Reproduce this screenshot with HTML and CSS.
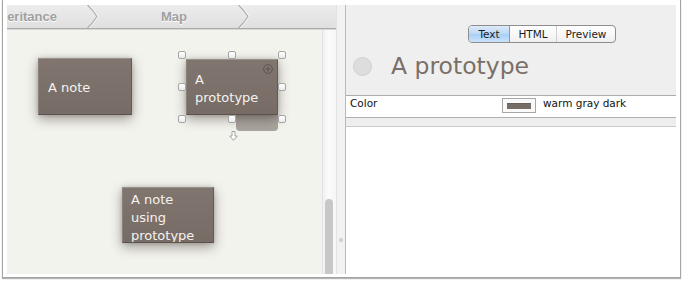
FILE: index.html
```html
<!DOCTYPE html>
<html lang="en">
<head>
<meta charset="utf-8">
<title>Map</title>
<link rel="stylesheet" href="styles.css">
</head>
<body>
<div class="window">
  <div class="left-pane">
    <nav class="crumbs">
      <div class="crumb crumb-first"><span>eritance</span></div>
      <svg class="chev" width="12" height="23" viewBox="0 0 12 23"><path class="chev-hi" d="M1.5 0 Q7 5 11 11.5 Q7 18 1.5 23"/><path class="chev-line" d="M0.5 0 Q6 5 10 11.5 Q6 18 0.5 23"/></svg>
      <div class="crumb crumb-map"><span>Map</span></div>
      <svg class="chev" width="12" height="23" viewBox="0 0 12 23"><path class="chev-hi" d="M1.5 0 Q7 5 11 11.5 Q7 18 1.5 23"/><path class="chev-line" d="M0.5 0 Q6 5 10 11.5 Q6 18 0.5 23"/></svg>
      <div class="crumb crumb-rest"></div>
    </nav>
    <div class="map-body">
      <div class="canvas">
        <div class="note note-a"><span>A note</span></div>
        <div class="proto-tab"></div>
        <div class="note note-b">
          <span>A prototype</span>
          <svg class="note-plus" width="10" height="10" viewBox="0 0 10 10"><circle cx="5" cy="5" r="4.4"/><path d="M5 2.6v4.8M2.6 5h4.8"/></svg>
        </div>
        <div class="selection">
          <span class="handle h-tl"></span><span class="handle h-tc"></span><span class="handle h-tr"></span>
          <span class="handle h-ml"></span><span class="handle h-mr"></span>
          <span class="handle h-bl"></span><span class="handle h-bc"></span><span class="handle h-br"></span>
        </div>
        <svg class="drop-arrow" width="9" height="10" viewBox="0 0 9 10"><path d="M3 0.5 H6 V5 H8.3 L4.5 9.3 L0.7 5 H3 Z"/></svg>
        <div class="note note-c note-top"><span>A note using prototype</span></div>
      </div>
      <div class="scrolltrack"><div class="thumb"></div></div>
    </div>
  </div>
  <div class="splitter"><span class="grip"></span></div>
  <div class="right-pane">
    <div class="inspector-head">
      <div class="segmented">
        <span class="seg seg-on">Text</span><span class="seg seg-html">HTML</span><span class="seg seg-preview">Preview</span>
      </div>
      <div class="title-row">
        <span class="badge-circle"></span>
        <h1 class="title">A prototype</h1>
      </div>
    </div>
    <div class="attr-row">
      <span class="attr-name">Color</span>
      <span class="swatch"><span class="swatch-fill"></span></span>
      <span class="attr-value">warm gray dark</span>
    </div>
    <div class="attr-gap"></div>
    <div class="text-area"></div>
  </div>
</div>
</body>
</html>
```

FILE: styles.css
```css
* { box-sizing: border-box; }
html, body { margin: 0; padding: 0; background: #fff; }
body {
  width: 683px;
  height: 282px;
  overflow: hidden;
  font-family: "DejaVu Sans", sans-serif;
}

.window {
  margin-left: 2px;
  width: 679px;
  height: 278px;
  border: 1px solid #a5a5a5;
  border-top: 0;
  padding: 5px 4px 3px;
  background: #fff;
  display: flex;
  box-shadow: 0 1px 1px rgba(0, 0, 0, 0.3);
}

/* ---------- left: map ---------- */
.left-pane {
  width: 329px;
  display: flex;
  flex-direction: column;
}

.crumbs {
  height: 24px;
  flex: none;
  display: flex;
  background: linear-gradient(#ececec, #e0e0e0);
  border-bottom: 1px solid #ababab;
  box-shadow: 0 1px 0 #d8d8d8;
  position: relative;
  z-index: 2;
}
.crumb {
  display: flex;
  align-items: center;
  font: bold 13px "Liberation Sans", Arial, sans-serif;
  color: #a0a0a0;
  text-shadow: 0 1px 0 #fff;
  white-space: nowrap;
}
.crumb span { flex: none; }
.crumb-first { width: 80px; justify-content: flex-end; padding-right: 30px; }
.crumb-map { width: 139px; padding-left: 62px; }
.crumb-rest { flex: 1; }
.chev { flex: none; display: block; }
.chev path { fill: none; stroke-width: 1.2; }
.chev-line { stroke: #adadad; }
.chev-hi { stroke: #fafafa; }

.map-body {
  flex: 1;
  display: flex;
}
.canvas {
  width: 315px;
  position: relative;
  background: #f3f3ee;
  overflow: hidden;
}
.scrolltrack {
  width: 14px;
  border-left: 1px solid #e3e3e3;
  background: linear-gradient(to right, #f0f0f0, #fbfbfb 40%, #f6f6f6);
  padding-left: 2px;
  display: flex;
  flex-direction: column;
  justify-content: flex-end;
}
.thumb {
  width: 8px;
  height: 75px;
  border-radius: 4px 4px 0 0;
  background: #c7c7c7;
}

/* notes on the map canvas */
.note {
  position: absolute;
  display: flex;
  flex-direction: column;
  justify-content: center;
  padding: 3px 8px 0;
  background: linear-gradient(#80766f, #766c65);
  border: 1px solid;
  border-color: #9a918b #645b55 #5a524c #8a817b;
  box-shadow: 0 4px 11px rgba(40, 30, 20, 0.42), 0 0 4px rgba(0, 0, 0, 0.15);
  color: #f5f2ee;
  font-size: 13px;
  line-height: 18px;
  overflow: hidden;
  z-index: 1;
}
.note-top { justify-content: flex-start; }
.note-a { left: 31px; top: 29px; width: 94px; height: 57px; padding-left: 9px; }
.note-b { left: 179px; top: 30px; width: 92px; height: 56px; padding-right: 18px; }
.note-c { left: 115px; top: 158px; width: 92px; height: 56px; }

.note-plus {
  position: absolute;
  left: 76px;
  top: 4px;
}
.note-plus circle, .note-plus path {
  fill: none;
  stroke: #5e5550;
  stroke-width: 1;
}

.proto-tab {
  position: absolute;
  left: 229px;
  top: 86px;
  width: 42px;
  height: 16px;
  border-radius: 0 0 4px 4px;
  background: #aaa49f;
}

.selection {
  position: absolute;
  left: 175px;
  top: 26px;
  width: 100px;
  height: 64px;
  z-index: 3;
}
.handle {
  position: absolute;
  width: 8px;
  height: 8px;
  border: 1px solid #a4a4a4;
  border-radius: 2px;
  background: linear-gradient(#ffffff, #ebebeb);
}
.h-tl { left: -4px; top: -4px; }
.h-tc { left: 46px; top: -4px; }
.h-tr { left: 96px; top: -4px; }
.h-ml { left: -4px; top: 28px; }
.h-mr { left: 96px; top: 28px; }
.h-bl { left: -4px; top: 60px; }
.h-bc { left: 46px; top: 60px; }
.h-br { left: 96px; top: 60px; }

.drop-arrow {
  position: absolute;
  left: 222px;
  top: 102px;
}
.drop-arrow path { fill: #fdfdfd; stroke: #a3a3a3; stroke-width: 1; }

/* ---------- splitter ---------- */
.splitter {
  width: 10px;
  background: #f2f2f2;
  border-left: 1px solid #e2e2e2;
  border-right: 1px solid #bababa;
  display: flex;
  flex-direction: column;
  align-items: center;
}
.grip {
  margin-top: auto;
  margin-bottom: 32px;
  width: 4px;
  height: 4px;
  border-radius: 50%;
  background: #e6e6e6;
  border: 1px solid #c3c3c3;
}

/* ---------- right: inspector ---------- */
.right-pane {
  width: 330px;
  display: flex;
  flex-direction: column;
}
.inspector-head {
  height: 91px;
  flex: none;
  background: #efefef;
  border-bottom: 1px solid #acacac;
  padding-top: 20px;
}
.segmented {
  margin-left: 122px;
  width: 148px;
  height: 18px;
  display: flex;
  border: 1px solid #8e8e8e;
  border-radius: 4px;
  background: linear-gradient(#ffffff, #f0f0f0);
  overflow: hidden;
  font-size: 10.5px;
  color: #1b1b1b;
}
.seg {
  display: flex;
  align-items: center;
  justify-content: center;
}
.seg-on {
  width: 41px;
  background: linear-gradient(#dde9f9, #bcd8f6 50%, #a9cff5 52%, #c9e2fb);
  border-right: 1px solid #8399b6;
}
.seg-html { width: 47px; border-right: 1px solid #d0d0d0; }
.seg-preview { width: 58px; }

.title-row {
  display: flex;
  align-items: center;
  margin-top: 9px;
  height: 28px;
}
.badge-circle {
  flex: none;
  width: 19px;
  height: 19px;
  margin-left: 7px;
  border-radius: 50%;
  background: #dddddd;
  border: 1px solid #d0d0d0;
}
.title {
  margin: 0 0 0 19px;
  font: normal 23.5px/28px "DejaVu Sans", sans-serif;
  color: #7b6f67;
}

.attr-row {
  height: 22px;
  flex: none;
  display: flex;
  align-items: flex-start;
  background: #fff;
  border-bottom: 1px solid #b0b0b0;
  font-size: 10.5px;
  line-height: 14px;
  color: #111;
}
.attr-name { width: 156px; padding-left: 4px; }
.swatch {
  width: 34px;
  height: 15px;
  margin-top: 2px;
  border: 1px solid #a7a7a7;
  background: #fafafa;
  display: flex;
  align-items: center;
  justify-content: center;
}
.swatch-fill {
  width: 24px;
  height: 6px;
  background: #776d67;
  border-top: 1px solid #6a615b;
}
.attr-value { margin-left: 7px; }

.attr-gap {
  height: 9px;
  flex: none;
  background: #eeeeee;
  border-bottom: 1px solid #cbcbcb;
}
.text-area {
  flex: 1;
  background: #fff;
}
```
